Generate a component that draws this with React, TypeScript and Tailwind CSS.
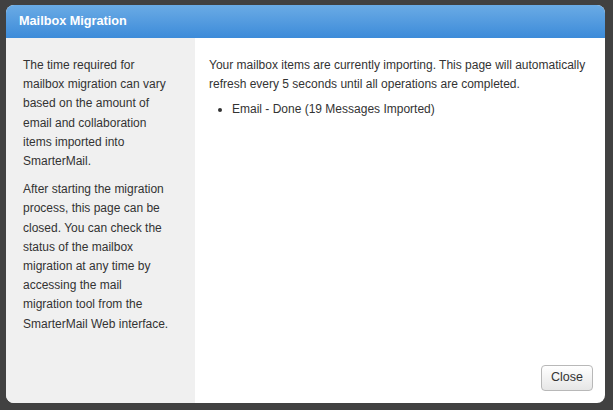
import React from "react";

export default function App() {
  return (
    <div className="w-[613px] h-[410px] bg-[#414141] pt-[5px] pl-[6px]" style={{ fontFamily: '"Liberation Sans", Arial, sans-serif' }}>
      <div className="w-[599px] h-[398px] rounded-[8px] overflow-hidden flex flex-col bg-white">
        <div className="h-[33px] shrink-0 bg-gradient-to-b from-[#6aabe5] to-[#3c8bd9] flex items-center pl-[13px] pt-[1px]">
          <span className="text-white font-bold text-[12.7px]">Mailbox Migration</span>
        </div>
        <div className="flex flex-1 min-h-0">
          <div className="w-[189px] shrink-0 bg-[#f0f0f0] pl-[17px] pr-[24px] pt-[18px] text-[12px] leading-[19.2px] text-[#333]">
            <p>The time required for mailbox migration can vary based on the amount of email and collaboration items imported into SmarterMail.</p>
            <p className="mt-[9px]">After starting the migration process, this page can be closed. You can check the status of the mailbox migration at any time by accessing the mail migration tool from the SmarterMail Web interface.</p>
          </div>
          <div className="flex-1 flex flex-col pl-[14px] pr-[12px] pt-[18px] pb-[12px] text-[12px] leading-[19.2px] text-[#333]">
            <p>Your mailbox items are currently importing. This page will automatically refresh every 5 seconds until all operations are completed.</p>
            <ul className="list-disc pl-[23px] mt-[6px]">
              <li>Email - Done (19 Messages Imported)</li>
            </ul>
            <div className="mt-auto flex justify-end">
              <button className="w-[52px] h-[26px] rounded-[4px] border border-[#b8b8b8] bg-gradient-to-b from-[#ffffff] to-[#e6e6e6] text-[12.5px] text-[#333]">Close</button>
            </div>
          </div>
        </div>
      </div>
    </div>
  );
}
